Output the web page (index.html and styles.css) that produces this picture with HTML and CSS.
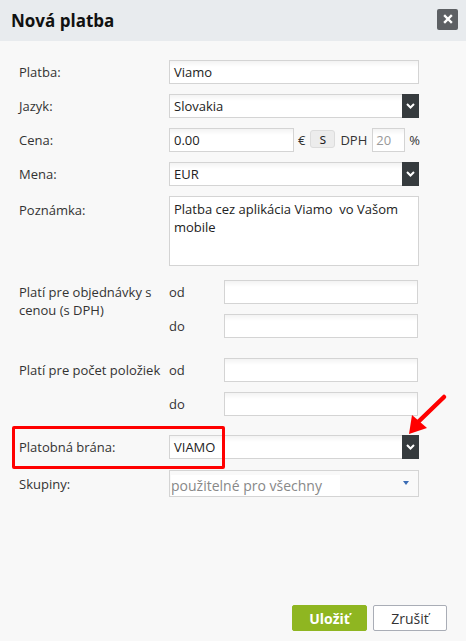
FILE: index.html
```html
<!DOCTYPE html>
<html>
<head>
<meta charset="utf-8">
<link rel="stylesheet" href="styles.css">
</head>
<body>
<div class="dialog">
  <div class="header">
    <h1 class="title">Nová platba</h1>
    <button class="close" type="button">
      <svg width="10" height="10" viewBox="0 0 10 10"><path d="M2 2 L8 8 M8 2 L2 8" stroke="#fff" stroke-width="2.4" stroke-linecap="square"/></svg>
    </button>
  </div>
  <div class="content">
    <div class="row">
      <div class="label">Platba:</div>
      <div class="input wide">Viamo</div>
    </div>
    <div class="row">
      <div class="label">Jazyk:</div>
      <div class="input wide select">Slovakia<span class="dd"><svg width="9" height="6" viewBox="0 0 9 6"><path d="M1 1 L4.5 4.5 L8 1" stroke="#fff" stroke-width="2" fill="none"/></svg></span></div>
    </div>
    <div class="row">
      <div class="label">Cena:</div>
      <div class="input price">0.00</div>
      <span class="unit euro">€</span>
      <span class="sbtn">s</span>
      <span class="unit dph">DPH</span>
      <div class="input vat">20</div>
      <span class="unit pct">%</span>
    </div>
    <div class="row">
      <div class="label">Mena:</div>
      <div class="input wide select">EUR<span class="dd"><svg width="9" height="6" viewBox="0 0 9 6"><path d="M1 1 L4.5 4.5 L8 1" stroke="#fff" stroke-width="2" fill="none"/></svg></span></div>
    </div>
    <div class="row top">
      <div class="label note-label">Poznámka:</div>
      <div class="input wide textarea">Platba cez aplikácia Viamo&nbsp; vo Vašom mobile</div>
    </div>
    <div class="range first">
      <div class="rlabel">Platí pre objednávky s cenou (s DPH)</div>
      <div class="sub">od</div>
      <div class="input rin"></div>
      <div class="sub">do</div>
      <div class="input rin"></div>
    </div>
    <div class="range second">
      <div class="rlabel single">Platí pre počet položiek</div>
      <div class="sub">od</div>
      <div class="input rin"></div>
      <div class="sub">do</div>
      <div class="input rin"></div>
    </div>
    <div class="row gate">
      <div class="label">Platobná brána:</div>
      <div class="input wide select">VIAMO<span class="dd"><svg width="9" height="6" viewBox="0 0 9 6"><path d="M1 1 L4.5 4.5 L8 1" stroke="#fff" stroke-width="2" fill="none"/></svg></span></div>
      <div class="redbox"></div>
    </div>
    <div class="row">
      <div class="label">Skupiny:</div>
      <div class="input wide groups"><span class="ph">použitelné pro všechny</span><span class="tri"></span></div>
    </div>
  </div>
  <div class="footer">
    <button class="btn save" type="button">Uložiť</button>
    <button class="btn cancel" type="button">Zrušiť</button>
  </div>
  <svg class="arrow" width="50" height="50" viewBox="0 0 50 50">
    <path d="M44 7 L16 34" stroke="#f00" stroke-width="4.5" stroke-linecap="round"/>
    <path d="M9 44 L12 25 L27 38 Z" fill="#f00"/>
  </svg>
</div>
</body>
</html>
```
FILE: styles.css
```css
* { box-sizing: border-box; }
html, body { margin: 0; padding: 0; }
body {
  width: 466px;
  height: 641px;
  background: #f8f8f8;
  font-family: "Open Sans", "Liberation Sans", sans-serif;
  font-size: 13px;
  color: #333;
}
.dialog {
  position: relative;
  height: 641px;
  display: flex;
  flex-direction: column;
}
.header {
  height: 41px;
  background: #e8ebee;
  display: flex;
  align-items: center;
  justify-content: space-between;
  padding: 0 8px 0 11px;
}
.title {
  margin: 0;
  font-size: 17px;
  font-weight: 700;
  color: #111;
  letter-spacing: 0;
}
.close {
  width: 21px;
  height: 21px;
  padding: 0;
  border: none;
  border-radius: 2px;
  background: #5d6064;
  display: flex;
  align-items: center;
  justify-content: center;
  margin-top: -3px;
}
.content {
  padding: 19px 0 0 19px;
}
.row {
  display: flex;
  align-items: center;
  margin-bottom: 10px;
  position: relative;
}
.row.top { align-items: flex-start; }
.label {
  width: 150px;
  flex: none;
}
.note-label { padding-top: 5px; }
.input {
  height: 24px;
  border: 1px solid #d4d4d4;
  background: linear-gradient(#f3f3f3, #fff 6px);
  padding: 0 4px;
  line-height: 22px;
  color: #222;
  position: relative;
}
.wide { width: 250px; }
.select { padding-right: 20px; }
.dd {
  position: absolute;
  right: -1px;
  top: -1px;
  width: 17px;
  height: 24px;
  background: #363b3e;
  display: flex;
  align-items: center;
  justify-content: center;
}
.price { width: 125px; }
.unit { color: #333; }
.euro { margin-left: 4px; }
.sbtn {
  margin-left: 5px;
  margin-top: 2px;
  width: 25px;
  height: 18px;
  border: 1px solid #dcdcdc;
  border-radius: 3px;
  background: #ececec;
  text-align: center;
  line-height: 15px;
  align-self: flex-start;
  font-size: 14px;
  font-weight: 400;
  color: #222;
}
.dph { margin-left: 5px; }
.vat {
  margin-left: 5px;
  width: 33px;
  color: #999;
  padding: 0 3px;
}
.pct { margin-left: 4px; }
.textarea {
  height: 70px;
  line-height: 18px;
  padding: 3px 4px;
  background: #fff;
}
.range {
  display: grid;
  grid-template-columns: 150px 55px 194px;
  grid-template-rows: 24px 24px;
  row-gap: 10px;
  align-items: center;
}
.range.first { margin-top: 14px; }
.range.second { margin-top: 20px; }
.rlabel {
  grid-row: 1 / 3;
  align-self: start;
  line-height: 18px;
  padding-top: 3px;
  padding-right: 4px;
}
.range .sub { grid-column: 2; }
.range .rin { grid-column: 3; width: 194px; }
.gate { margin-top: 19px; margin-bottom: 11px; }
.redbox {
  position: absolute;
  left: -7px;
  top: -9px;
  width: 213px;
  height: 43px;
  border: 3px solid #f00;
  border-radius: 2px;
}
.groups {
  height: 27px;
  line-height: 21px;
  background: #f9f9f9;
  padding: 4px 0 0 1px;
}
.ph {
  display: block;
  width: 169px;
  height: 21px;
  background: #fff;
  color: #888;
  font-size: 14px;
}
.tri {
  position: absolute;
  right: 9px;
  top: 10px;
  width: 0;
  height: 0;
  border-left: 3.5px solid transparent;
  border-right: 3.5px solid transparent;
  border-top: 4px solid #3b6cb4;
}
.footer {
  margin-top: auto;
  display: flex;
  justify-content: flex-end;
  gap: 6px;
  padding: 0 19px 10px 0;
}
.btn {
  height: 26px;
  border-radius: 2px;
  font-family: "Open Sans", "Liberation Sans", sans-serif;
  font-size: 14px;
  padding: 0;
}
.save {
  width: 75px;
  background: #8fb621;
  border: 1px solid #8fb621;
  color: #fff;
  font-weight: 700;
}
.cancel {
  width: 74px;
  background: #fff;
  border: 1px solid #a9adb6;
  color: #333;
}
.arrow {
  position: absolute;
  left: 400px;
  top: 390px;
}
```
